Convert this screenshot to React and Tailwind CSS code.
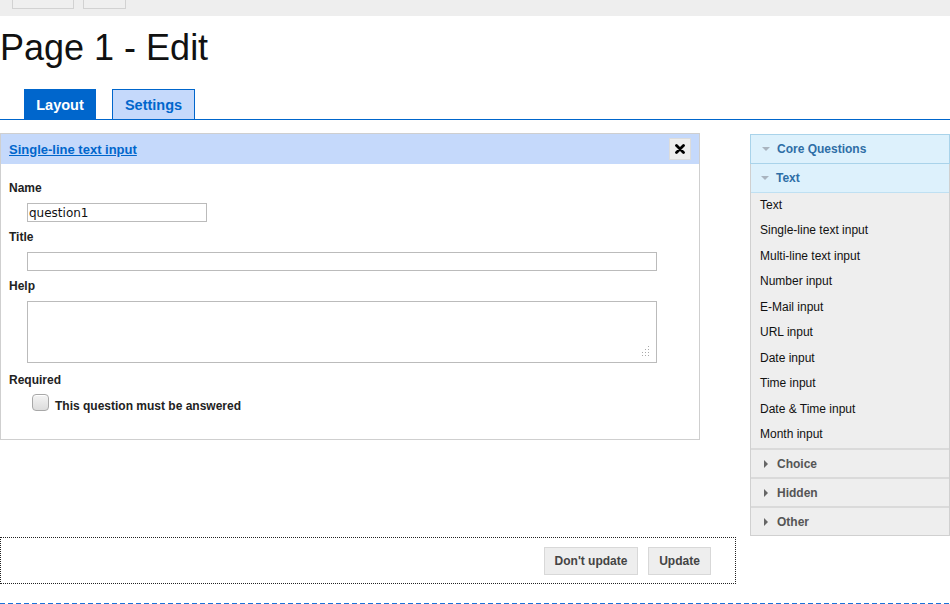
import React from 'react';

const items = [
  'Text',
  'Single-line text input',
  'Multi-line text input',
  'Number input',
  'E-Mail input',
  'URL input',
  'Date input',
  'Time input',
  'Date & Time input',
  'Month input',
];

function DownArrow() {
  return (
    <svg width="8" height="5" viewBox="0 0 8 5" className="shrink-0">
      <polygon points="0,0 8,0 4,4" fill="#a9b4bf" />
    </svg>
  );
}

function RightArrow() {
  return (
    <svg width="5" height="8" viewBox="0 0 5 8" className="shrink-0">
      <polygon points="0,0 4,4 0,8" fill="#666" />
    </svg>
  );
}

function Label({ children, className = '' }) {
  return <div className={`text-[12px] leading-[14px] font-bold text-[#222] ${className}`}>{children}</div>;
}

export default function App() {
  return (
    <div className="min-h-[604px] w-[950px] bg-white text-[#222] font-['Liberation_Sans',Arial,sans-serif] overflow-hidden">
      {/* toolbar */}
      <div className="h-4 bg-[#eee] flex items-start gap-[9px] pl-3">
        <div className="w-[62px] h-[9px] border border-t-0 border-[#d2d2d2] bg-[#efefef]" />
        <div className="w-[43px] h-[9px] border border-t-0 border-[#d2d2d2] bg-[#efefef]" />
      </div>

      <h1 className="mt-[11px] text-[36px] leading-[41px] text-[#111]">Page 1 - Edit</h1>

      {/* tabs */}
      <div className="mt-[21px] flex items-end gap-[16px] pl-[24px] border-b border-[#0066cc]">
        <div className="w-[72px] h-[30px] pt-[3px] bg-[#0066cc] text-white text-[14.5px] font-bold flex items-center justify-center">
          Layout
        </div>
        <div className="w-[83px] h-[30px] pt-[3px] bg-[#c5d9fb] border border-b-0 border-[#0066cc] text-[#0066cc] text-[14.5px] font-bold flex items-center justify-center">
          Settings
        </div>
      </div>

      {/* main */}
      <div className="mt-[13px] flex items-start">
        <div className="w-[700px] border border-[#cfcfcf]">
          <div className="h-[30px] bg-[#c5d9fb] flex items-center justify-between pl-[8px] pr-[8px]">
            <a className="mt-px text-[13px] font-bold text-[#0066cc] underline">Single-line text input</a>
            <button className="w-[22px] h-[22px] bg-[#eee] border border-[#dcdcdc] flex items-center justify-center">
              <svg width="10" height="10" viewBox="0 0 10 10">
                <path d="M1.5 1.5 L8.5 8.5 M8.5 1.5 L1.5 8.5" stroke="#000" strokeWidth="2.8" strokeLinecap="round" />
              </svg>
            </button>
          </div>
          <div className="px-[8px] pt-[17px] pb-[26px]">
            <Label>Name</Label>
            <div className="ml-[18px] mt-[8px] w-[180px] h-[19px] border border-[#bbb] flex items-center pl-[1px] text-[12px] font-['DejaVu_Sans',sans-serif] text-[#111]">
              question1
            </div>
            <Label className="mt-[8px]">Title</Label>
            <div className="ml-[18px] mt-[8px] w-[630px] h-[19px] border border-[#bbb]" />
            <Label className="mt-[8px]">Help</Label>
            <div className="relative ml-[18px] mt-[8px] w-[630px] h-[62px] border border-[#bbb]">
              <svg width="10" height="10" viewBox="0 0 10 10" className="absolute right-[6px] bottom-[6px]">
                <g fill="#aaa">
                  <rect x="8" y="0" width="1" height="1" />
                  <rect x="8" y="3" width="1" height="1" />
                  <rect x="5" y="3" width="1" height="1" />
                  <rect x="8" y="6" width="1" height="1" />
                  <rect x="5" y="6" width="1" height="1" />
                  <rect x="2" y="6" width="1" height="1" />
                  <rect x="8" y="9" width="1" height="1" />
                  <rect x="5" y="9" width="1" height="1" />
                  <rect x="2" y="9" width="1" height="1" />
                </g>
              </svg>
            </div>
            <Label className="mt-[10px]">Required</Label>
            <div className="mt-[7px] ml-[23px] flex items-start">
              <div className="w-[17px] h-[17px] rounded-[4px] border border-[#a8a8a8] bg-gradient-to-b from-[#f4f4f4] to-[#dcdcdc] shadow-[inset_0_1px_0_#fff]" />
              <div className="ml-[6px] mt-[5px] text-[12px] leading-[14px] font-bold text-[#222]">
                This question must be answered
              </div>
            </div>
          </div>
        </div>

        {/* sidebar */}
        <div className="ml-[50px] mt-px w-[200px]">
          <div className="h-[30px] border border-[#a9d3ea] bg-[#ddf1fc] flex items-center gap-[7px] pl-[11px] text-[12px] font-bold text-[#2e6ea6]">
            <DownArrow />
            Core Questions
          </div>
          <div className="border-x border-b border-[#d0d0d0] bg-[#eee]">
            <div className="h-[29px] border-b border-[#bfe0f2] bg-[#ddf1fc] flex items-center gap-[7px] pl-[10px] text-[12px] font-bold text-[#2e6ea6]">
              <DownArrow />
              Text
            </div>
            {items.map((it) => (
              <div key={it} className="h-[25.5px] pb-[2px] flex items-center pl-[9px] text-[12px] text-[#111]">
                {it}
              </div>
            ))}
            {['Choice', 'Hidden', 'Other'].map((h) => (
              <div
                key={h}
                className="h-[29px] border-t-2 border-[#dadada] flex items-center gap-[8px] pl-[13px] text-[12px] font-bold text-[#555]"
              >
                <RightArrow />
                {h}
              </div>
            ))}
          </div>
        </div>
      </div>

      {/* bottom actions */}
      <div className="mt-px w-[736px] h-[47px] border border-dotted border-[#222] flex items-center justify-end gap-[10px] pr-[24px]">
        <button className="w-[94px] h-[28px] bg-[#eee] border border-[#d8d8d8] text-[12px] font-bold text-[#444]">
          Don't update
        </button>
        <button className="w-[63px] h-[28px] bg-[#eee] border border-[#d8d8d8] text-[12px] font-bold text-[#444]">
          Update
        </button>
      </div>

      <div className="mt-[19px] h-[2px] w-full bg-[repeating-linear-gradient(90deg,#1a73d9_0px,#1a73d9_5px,transparent_5px,transparent_8px)]" />
    </div>
  );
}
